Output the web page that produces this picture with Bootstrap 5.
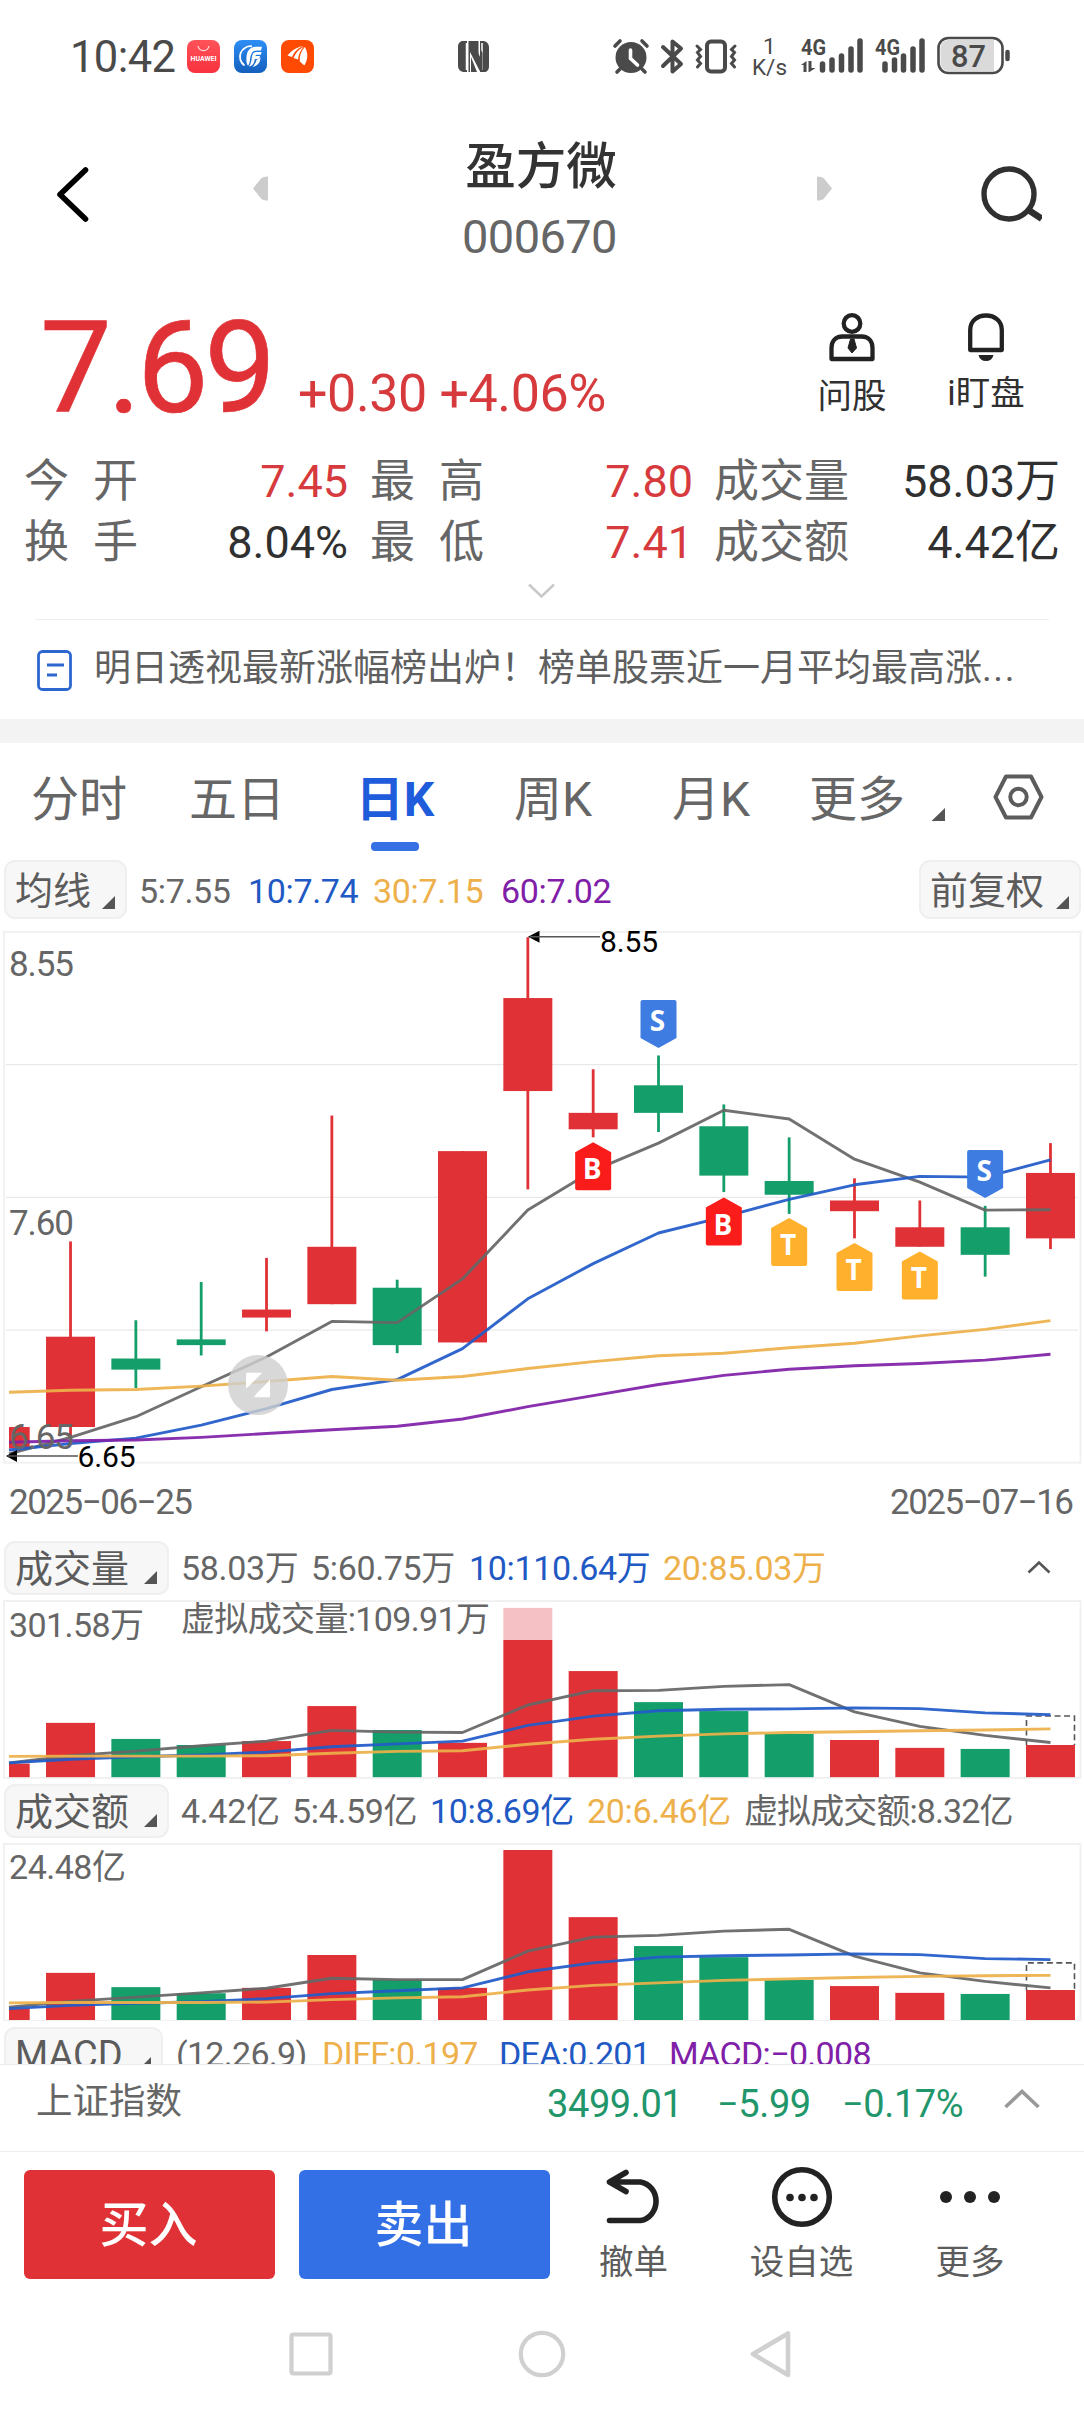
<!DOCTYPE html>
<html lang="zh-CN">
<head>
<meta charset="utf-8">
<meta name="viewport" content="width=device-width, initial-scale=1">
<title>盈方微 000670</title>
<link rel="stylesheet" href="https://cdn.jsdelivr.net/npm/bootstrap@5.3.0/dist/css/bootstrap.min.css">
<style>
:root{--up:#e03236;--down:#149e6a;--blue:#2159c4;--gold:#edb04a;--violet:#8020a8;--ink:#333;--soft:#666}
html,body{overflow:hidden}
body{width:1084px;height:2412px;background:#fff;color:var(--soft);font-family:Roboto,"Noto Sans CJK SC",sans-serif;line-height:1;white-space:nowrap}
svg{display:block;flex:none}
svg text{font-family:Roboto,"Noto Sans CJK SC",sans-serif}
.up{color:var(--up)}.down{color:#21966a}.ink{color:var(--ink)}.blu{color:var(--blue)}.gld{color:var(--gold)}.vio{color:var(--violet)}
.statusbar{height:112px;padding-left:70px;color:#4a4a4a}
.clock{width:117px;font-size:43.5px;letter-spacing:-.6px;font-weight:400;padding-top:4px}
.head{height:188px;padding:0 42px 0 56px}
.head-title{font-size:50.5px;font-weight:500;color:#333;padding:30px 3px 0 0}
.head-code{font-size:47px;letter-spacing:-.6px;padding:20px 6px 0 0}
.quote{height:152px;padding-left:40px}
.price{font-size:128px;letter-spacing:-4.5px;width:258px;font-weight:400;padding-top:4px;-webkit-text-stroke:.6px var(--up)}
.chg{font-size:52px;letter-spacing:-.4px;color:#d63a3d;padding-top:68px}
.tool{width:134px;font-size:34.5px;font-weight:400;color:#303030;padding-top:12px}
.stats{height:122px;font-size:45px;padding:0 24px 0 24px}
.stats .line{height:61px;padding-bottom:2px}
.stats b{font-weight:400;color:#303030}
.stats b.up{color:#d63a3d}
.pair{letter-spacing:24px}
.k1{width:171px}.v1{width:153px}.k2{width:143px;margin-left:22px}.v2{width:180px}.k3{margin-left:21px;width:136px}
.rule{height:1px;background:#eee;margin:0 35px}
.news{height:99px;padding-left:37px;font-size:37px;color:#5f5f5f}
.news span{padding-bottom:3px}
.news i{font-style:normal;letter-spacing:1.6px}
.band{height:24px;background:#f3f3f3}
.ktabs{height:117px;font-size:48px}
.ktabs .nav-link{padding:25px 0 0;color:var(--soft);line-height:64px;height:108px;width:158px;text-align:center;position:relative}
.ktabs .nav-link.active{color:#1e5cdb;font-weight:700}
.ktabs .nav-link.active::after{content:"";position:absolute;left:55px;bottom:0;width:48px;height:9px;border-radius:4px;background:#3570e4}
.ktabs .more-link{width:134px}
.pick{height:59px;border:2px solid #efefef;border-radius:11px;background:#f7f7f7;color:#5c5c5c;font-size:38px;padding:2px 10px 0 9px}
.legend{font-size:34px;padding-top:3px;letter-spacing:-.35px}
.pane-legend{padding-top:0}
.macd{height:43px;overflow:hidden}
.index{height:87px;border-top:1px solid #ebebeb;font-size:36.5px;padding-left:36px}
.index span{padding-top:19px}
.index .num{font-size:38px;letter-spacing:-.4px;padding-top:20px}
.trade{height:141px;border-top:1px solid #ededed;padding-left:24px}
.trade .btn{width:251px;height:109px;margin-top:18px;border:0;border-radius:6px;font-size:49px;font-weight:500;color:#fff;margin-right:24px;padding:3px 2px 0 0}
.buy{background:#e03236!important}.sell{background:#3370e6!important}
.act{font-size:34.5px;font-weight:400;color:#5c5c5c}
.act span{padding-top:7px}
</style>
</head>
<body>

<header class="statusbar d-flex align-items-center">
  <div class="clock">10:42</div>
  <svg width="310" height="40" viewBox="187 36 310 40">
    <defs>
      <linearGradient id="gr" x1="0" y1="0" x2="0" y2="1"><stop offset="0" stop-color="#ff5359"/><stop offset="1" stop-color="#f8323f"/></linearGradient>
      <linearGradient id="gb" x1="0" y1="0" x2="0" y2="1"><stop offset="0" stop-color="#2d8ef5"/><stop offset="1" stop-color="#145fbd"/></linearGradient>
    </defs>
    <rect x="187" y="40" width="33" height="33" rx="8" fill="url(#gr)"/>
    <path d="M198 46a5.6 5.6 0 0 0 11 0" fill="none" stroke="#ffd9da" stroke-width="1.3"/>
    <text x="190.500" y="61.200" font-size="6.500" font-weight="700" fill="#fff" textLength="26" lengthAdjust="spacingAndGlyphs">HUAWEI</text>
    <rect x="234" y="40" width="33" height="33" rx="8" fill="url(#gb)"/>
    <path d="M252 46.300a10.600 10.600 0 0 0-7.500 19.200" fill="none" stroke="#fff" stroke-width="1.800"/>
    <path d="M262 46.800h-5.500c-6.500 0-9.500 4-10 10-.3 4-.2 6.500 1.500 9 1-1 1.700-3 2-6 .7-6.500 2.500-9.300 7.500-9.300h3.500zM261.500 52h-5c-3 0-4 1.600-4.500 4.500-.5 4-1 7.500-3 10 3.500-.5 5.300-3 5.800-7.500h4.500l.8-3h-4.700c.2-1 .8-1.300 1.600-1.300h4zM260.500 57.500c0 5-3 8.500-8 9.500 2.200-2 3.300-4.500 4-7z" fill="#fff"/>
    <rect x="281" y="40" width="33" height="33" rx="8" fill="#ff4a03"/>
    <path d="M303 46c-6 1-11.500 4.500-15.500 9.500l4.500 1.500c2-5 5.500-8.500 11-11zM304 46.500c-5 2.500-8.500 6.500-10.500 11.500l4.500 1.500c.5-5 2.500-9.500 6-13zM304.800 47c-3.800 4-5.500 9-5 14.500l4.500 4c3.700-6 4.200-12.500.5-18.500z" fill="#fff"/>
    <path d="M463 41h4v31h-2.500c-4 0-6.500-2.500-6.500-6.500V47c0-3.500 2-6 5-6zM484.500 72h-4.500V41h2.500c4 0 6.500 2.500 6.500 6.500V66c0 3.500-1.500 6-4.500 6z" fill="#4a4a4a"/>
    <path d="M466.500 43v27M482 43v27" stroke="#fff" stroke-width="1.500"/>
    <path d="M468.500 41h4.500l7.500 17V49l2 4v17.500h-3L470 52v20h-1.500z" fill="#4a4a4a"/>
    <path d="M470.500 41h8v15zM477 72h-6V57z" fill="#4a4a4a"/>
  </svg>
  <svg class="ms-auto" width="404" height="52" viewBox="612 30 404 52" style="margin-right:68px">
    <g fill="#4a4a4a" stroke="#4a4a4a" stroke-linecap="round">
      <circle cx="631" cy="57.500" r="15.500" stroke="none"/>
      <path d="M615 46l5-5M642 41l5 5M620 69l-3 3M642 69l3 3" stroke-width="3.600"/>
      <path d="M630.500 50v8.500l7 6.500" fill="none" stroke="#fff" stroke-width="3.600"/>
      <path d="M663 47l18 17-8.500 7.500v-30l8.500 7L663 66" fill="none" stroke-width="4" stroke-linejoin="round"/>
      <rect x="707" y="41.500" width="18" height="30" rx="4" fill="none" stroke-width="4"/>
      <path d="M697 46l3.500 3.500-3 3 3 4-3 3.500 3 3.500-3 3.500M735 46l-3.500 3.500 3 3-3 4 3 3.500-3 3.500 3 3.500" fill="none" stroke-width="3"/>
    </g>
    <g fill="#4a4a4a">
      <text x="763" y="53.500" font-size="22.500">1</text>
      <text x="752" y="75" font-size="22.500" textLength="35" lengthAdjust="spacingAndGlyphs">K/s</text>
      <text x="801" y="54.500" font-size="22" font-weight="700" textLength="25" lengthAdjust="spacingAndGlyphs">4G</text>
      <text x="875" y="54.500" font-size="22" font-weight="700" textLength="25" lengthAdjust="spacingAndGlyphs">4G</text>
      <path d="M801 65l5.500-4v11h-3v-7zM808.500 61h3v7h4l-6 4h-1z"/>
    </g>
    <path d="M822.500 64v6M832 60v10M841.500 56v14M851 49v21M860 41v29M885 64v6M894.500 60v10M903.500 56v14M913 49v21M922 41v29" stroke="#4a4a4a" stroke-width="5.500" stroke-linecap="round"/>
    <rect x="938.500" y="38" width="64" height="35" rx="10" fill="#fff" stroke="#4a4a4a" stroke-width="2.600"/>
    <path d="M948 40h46v31h-46a8 8 0 0 1-7.500-8V48a8 8 0 0 1 7.500-8z" fill="#dadada"/>
    <path d="M1007.500 52v7" stroke="#4a4a4a" stroke-width="4.500" stroke-linecap="round"/>
    <text x="951" y="66.500" font-size="31" font-weight="500" fill="#4a4a4a" textLength="35" lengthAdjust="spacingAndGlyphs">87</text>
  </svg>
</header>

<nav class="head d-flex align-items-start">
  <svg class="mt-5" width="34" height="66" viewBox="56 160 34 66"><path d="M85.500 170L60 194.500 85.500 219" fill="none" stroke="#000" stroke-width="5.600" stroke-linecap="round" stroke-linejoin="round"/></svg>
  <div class="d-flex flex-fill justify-content-between" style="padding-left:162px;padding-right:147px">
    <svg width="16" height="150" viewBox="253 112 16 150"><path d="M254 188.500l8-10q2-2 7-2v24q-5 0-7-2z" fill="#ccc"/></svg>
    <div class="text-center">
      <div class="head-title">盈方微</div>
      <div class="head-code">000670</div>
    </div>
    <svg width="16" height="150" viewBox="817 112 16 150"><path d="M832 188.500l-8-10q-2-2-7-2v24q5 0 7-2z" fill="#ccc"/></svg>
  </div>
  <svg width="62" height="120" viewBox="980 112 62 120" fill="none" stroke="#303030" stroke-width="5.400"><circle cx="1009" cy="194" r="25"/><path d="M1030 211l9 6" stroke-width="6.500" stroke-linecap="square"/></svg>
</nav>

<section class="quote d-flex">
  <div class="price up">7.69</div>
  <div class="chg">+0.30 +4.06%</div>
  <div class="d-flex ms-auto" style="padding-right:31px">
    <div class="tool d-flex flex-column align-items-center">
      <svg width="48" height="50" viewBox="828 312 48 50" fill="none" stroke="#222" stroke-width="4.300"><circle cx="852" cy="323.500" r="8.300"/><path d="M831.500 359v-11c0-7 4-11.500 11-11.500h19c7 0 11 4.500 11 11.500v11z" stroke-linejoin="round"/><path d="M850.500 339h3.500l2.500 9-4.500 5-4-5z" fill="#222" stroke-width="1"/></svg>
      <div style="padding-top:17px">问股</div>
    </div>
    <div class="tool d-flex flex-column align-items-center">
      <svg width="40" height="50" viewBox="966 312 40 50"><path d="M970.200 350v-20c0-9 7-14.500 15.800-14.500s15.800 5.500 15.800 14.500v20z" fill="none" stroke="#222" stroke-width="4.300" stroke-linejoin="round"/><path d="M978.500 355h15q-1.500 6-7.500 6t-7.500-6z" fill="#222"/></svg>
      <div style="padding-top:14px">i盯盘</div>
    </div>
  </div>
</section>

<section class="stats">
  <div class="line d-flex align-items-center"><span class="k1 pair">今开</span><b class="v1 text-end up">7.45</b><span class="k2 pair">最高</span><b class="v2 text-end up">7.80</b><span class="k3">成交量</span><b class="ms-auto">58.03万</b></div>
  <div class="line d-flex align-items-center"><span class="k1 pair">换手</span><b class="v1 text-end">8.04%</b><span class="k2 pair">最低</span><b class="v2 text-end up">7.41</b><span class="k3">成交额</span><b class="ms-auto">4.42亿</b></div>
</section>
<div class="d-flex justify-content-center" style="height:45px"><svg width="34" height="30" viewBox="525 574 34 30"><path d="M529 584.500l12.500 12 12.500-12" fill="none" stroke="#c9c9c9" stroke-width="2.600"/></svg></div>
<div class="rule"></div>
<section class="news d-flex align-items-center">
  <svg width="57" height="44" viewBox="37 647 57 44" fill="none" stroke="#2c66cf"><rect x="38.500" y="650.500" width="32" height="38" rx="4" stroke-width="2.800"/><path d="M47 664h17M47 674h10" stroke-width="3.200"/></svg>
  <span>明日透视最新涨幅榜出炉！榜单股票近一月平均最高涨<i>...</i></span>
</section>
<div class="band"></div>

<nav class="ktabs nav d-flex flex-nowrap">
  <a class="nav-link">分时</a><a class="nav-link">五日</a><a class="nav-link active">日K</a><a class="nav-link">周K</a><a class="nav-link">月K</a>
  <a class="nav-link more-link">更多</a>
  <svg width="130" height="100" viewBox="924 743 130 100"><path d="M945 808v13h-13.500z" fill="#555"/><path d="M1006 776.500h25l10.500 20.500-10.500 20.500h-25L995.500 797z" fill="none" stroke="#5c5c5c" stroke-width="4" stroke-linejoin="round"/><circle cx="1018.500" cy="797" r="8.200" fill="none" stroke="#5c5c5c" stroke-width="4"/></svg>
</nav>

<div class="d-flex align-items-center" style="height:59px;padding:0 3px 0 4px">
  <div class="pick d-flex align-items-center" style="width:123px">均线<svg class="ms-auto" width="13" height="13" viewBox="0 0 13 13" style="margin-top:23px"><path d="M13 0v13H0z" fill="#555"/></svg></div>
  <div class="legend d-flex flex-fill" style="padding-left:12px"><span style="width:109px">5:7.55</span><span class="blu" style="width:125px">10:7.74</span><span class="gld" style="width:128px">30:7.15</span><span class="vio">60:7.02</span></div>
  <div class="pick d-flex align-items-center" style="width:162px">前复权<svg class="ms-auto" width="13" height="13" viewBox="0 0 13 13" style="margin-top:23px"><path d="M13 0v13H0z" fill="#555"/></svg></div>
</div>

<svg id="kline" width="1084" height="622" viewBox="0 919 1084 622"></svg>

<div class="d-flex align-items-center" style="height:54px;padding-left:4px">
  <div class="pick d-flex align-items-center" style="width:165px;height:54px">成交量<svg class="ms-auto" width="13" height="13" viewBox="0 0 13 13" style="margin-top:16px"><path d="M13 0v13H0z" fill="#555"/></svg></div>
  <div class="legend pane-legend d-flex" style="padding-left:12px"><span style="width:130px">58.03万</span><span style="width:158px">5:60.75万</span><span class="blu" style="width:194px">10:110.64万</span><span class="gld">20:85.03万</span></div>
  <svg class="ms-auto" width="26" height="16" viewBox="1026 1556 26 16" style="margin-right:32px"><path d="M1028.500 1568.500l10.500-10 10.500 10" fill="none" stroke="#555" stroke-width="2.600"/></svg>
</div>
<svg id="vol" width="1084" height="189" viewBox="0 1595 1084 189"></svg>

<div class="d-flex align-items-center" style="height:54px;padding-left:4px">
  <div class="pick d-flex align-items-center" style="width:165px;height:54px">成交额<svg class="ms-auto" width="13" height="13" viewBox="0 0 13 13" style="margin-top:16px"><path d="M13 0v13H0z" fill="#555"/></svg></div>
  <div class="legend pane-legend d-flex" style="padding-left:12px"><span style="width:111px">4.42亿</span><span style="width:138px">5:4.59亿</span><span class="blu" style="width:157px">10:8.69亿</span><span class="gld" style="width:157px">20:6.46亿</span><span style="letter-spacing:-.9px">虚拟成交额:8.32亿</span></div>
</div>
<svg id="amt" width="1084" height="183" viewBox="0 1838 1084 183"></svg>

<div class="macd"><div class="d-flex align-items-center" style="height:54px;padding-left:4px;margin-top:6px">
  <div class="pick d-flex align-items-center" style="width:159px;height:54px">MACD<svg class="ms-auto" width="13" height="13" viewBox="0 0 13 13" style="margin-top:16px"><path d="M13 0v13H0z" fill="#555"/></svg></div>
  <div class="legend pane-legend d-flex" style="padding-left:13px;letter-spacing:-.7px"><span style="width:146px">(12.26.9)</span><span class="gld" style="width:177px">DIFF:0.197</span><span class="blu" style="width:170px">DEA:0.201</span><span class="vio">MACD:−0.008</span></div>
</div></div>

<section class="index d-flex align-items-start">
  <span style="width:511px">上证指数</span>
  <span class="num down" style="width:170px">3499.01</span><span class="num down" style="width:125px">−5.99</span><span class="num down" style="width:161px">−0.17%</span>
  <svg width="38" height="50" viewBox="1004 2064 38 50"><path d="M1006.500 2106l16.500-15.500 16.500 15.500" fill="none" stroke="#999" stroke-width="3.600"/></svg>
</section>

<section class="trade d-flex">
  <button class="btn buy">买入</button><button class="btn sell">卖出</button>
  <div class="act d-flex flex-column align-items-center" style="width:119px"><svg width="64" height="86" viewBox="602 2152 64 86"><path d="M609.500 2182h31a18.500 19.500 0 0 1 0 38.500h-31M626 2172.500l-16.500 9.500 16.500 9.500" fill="none" stroke="#222" stroke-width="5.600" stroke-linecap="round" stroke-linejoin="round"/></svg><span>撤单</span></div>
  <div class="act d-flex flex-column align-items-center" style="width:217px"><svg width="64" height="86" viewBox="770 2152 64 86"><circle cx="802" cy="2197" r="27.300" fill="none" stroke="#222" stroke-width="5.600"/><circle cx="790" cy="2197.500" r="3.800" fill="#222"/><circle cx="802" cy="2197.500" r="3.800" fill="#222"/><circle cx="814" cy="2197.500" r="3.800" fill="#222"/></svg><span>设自选</span></div>
  <div class="act d-flex flex-column align-items-center" style="width:120px"><svg width="64" height="86" viewBox="938 2152 64 86" fill="#222"><circle cx="946" cy="2197" r="6"/><circle cx="970" cy="2197" r="6"/><circle cx="994" cy="2197" r="6"/></svg><span>更多</span></div>
</section>

<footer class="d-flex justify-content-center" style="height:120px">
  <svg width="520" height="120" viewBox="282 2292 520 120" fill="none" stroke="#d0d0d0" stroke-width="4.200" stroke-linejoin="round"><rect x="291.500" y="2334.500" width="39" height="39" rx="2"/><circle cx="542" cy="2354" r="21.200"/><path d="M788 2333.500v41.500L753 2354z" stroke-width="4.600"/></svg>
</footer>

<script src="https://cdn.jsdelivr.net/npm/bootstrap@5.3.0/dist/js/bootstrap.bundle.min.js"></script>
<script>
const UP='#e03236',DOWN='#149e6a',GRAY='#666',BLUE='#215bc8',GOLD='#edb04a',VIO='#8020a8';
const cx=i=>5.2+i*65.33;
// rectangles are clamped to the plot's left edge, so the oldest day is cut off
const box=(i,t,b,c,o=1)=>{const l=Math.max(9,cx(i)-24.5),r=cx(i)+24.5;return `<rect x="${l}" y="${t}" width="${r-l}" height="${b-t}" fill="${c}" opacity="${o}"/>`};
const line=(ys,f,c)=>`<polyline points="${ys.map((v,i)=>Math.max(9,cx(i)).toFixed(1)+','+f(v).toFixed(1)).join(' ')}" fill="none" stroke="${c}" stroke-width="2.9" stroke-linejoin="round" opacity=".93"/>`;
const txt=(x,y,s,size,w,c=GRAY)=>`<text x="${x}" y="${y}" font-size="${size}" fill="${c}" textLength="${w}">${s}</text>`;
const frame=(t,b)=>`<rect x="4" y="${t}" width="1076.5" height="${b-t}" fill="none" stroke="#f0f0f0" stroke-width="1.8"/>`;

// daily candles: high, body top, body bottom, low, colour
const P=v=>920+v/2.6133;
const K=[[1325,1325,1381,1381,1],[840,1089,1325,1352,1],[1046,1146,1175,1223,0],[946,1096,1111,1138,0],[883,1018,1039,1075,1],[511,854,1004,1004,1],[940,961,1111,1132,0],[604,604,1104,1104,1],[45,204,447,704,1],[390,504,547,568,1],[354,432,504,554,0],[482,539,668,711,0],[568,682,718,768,0],[675,733,761,832,1],[733,803,854,854,1],[747,803,875,932,0],[583,661,832,860,1]];
let h=frame(931.8,1462.7)+[378,725,1072].map(v=>`<path d="M6 ${P(v)}H1078" stroke="#e9e9e9" stroke-width="1.3"/>`).join('');
K.forEach(([a,t,b,z,u],i)=>{const c=u?UP:DOWN;if(i)h+=`<path d="M${cx(i)} ${P(a)}V${P(z)}" stroke="${c}" stroke-width="2.8"/>`;h+=box(i,P(t),P(b),c)});
h+=line([1395,1352,1298,1220,1142,1049,1052,938,758,655,583,497,520,625,685,758,757],P,GRAY)
 +line([1385,1368,1354,1320,1277,1227,1201,1120,990,898,818,776,730,692,670,672,627],P,BLUE)
 +line([1234,1229,1227,1218,1206,1193,1203,1193,1172,1154,1139,1132,1118,1106,1087,1070,1047],P,GOLD)
 +line([1365,1361,1359,1352,1342,1332,1323,1304,1272,1243,1214,1190,1174,1165,1159,1150,1135],P,VIO);
[[10,1000,'S'],[9,1142.3,'B'],[11,1197.5,'B'],[12,1218,'T'],[13,1243,'T'],[14,1251.4,'T'],[15,1150,'S']].forEach(([i,y,s])=>{
 const x=cx(i),c={S:'#3f7ce2',B:'#f91c1b',T:'#ffb02c'}[s];
 const d=s=='S'?`M${x-18} ${y+2}q0-2 2-2h32q2 0 2 2v36l-18 10-18-10z`:`M${x} ${y}l18 10v36q0 2-2 2h-32q-2 0-2-2v-36z`;
 h+=`<path d="${d}" fill="${c}"/><text x="${x-1}" y="${y+(s=='S'?30.5:37)}" font-size="28" font-weight="700" fill="#fff" text-anchor="middle" style="font-family:'Open Sans'">${s}</text>`});
h+=txt(9,975.5,'8.55',35,65)+txt(9,1234.6,'7.60',35,65)+txt(9,1449,'6.65',35,65)
 +`<path d="M528 936.8l11.500-6v12zM6 1456l11-6v12z" fill="#000"/><path d="M530 936.8h70M8 1456h70" stroke="#555" stroke-width="1.6"/>`
 +txt(600,951.5,'8.55',30,58,'#000')+txt(77.5,1466.5,'6.65',30,58,'#000')
 +`<circle cx="258" cy="1385" r="30" fill="#cfcfcf" opacity=".82"/><path d="M246 1388.500V1374q0-1.200 1.200-1.200h15L260 1375l-10.500 10.500zM270 1379.500V1396q0 1.200-1.200 1.200H254l2.500-3.700 10-10z" fill="#fff"/>`
 +txt(9,1513.5,'2025−06−25',35,184)+txt(890,1513.5,'2025−07−16',35,184);
kline.innerHTML=h;

// volume and turnover panes
const V=v=>1520+v/2.8;
const G=[1,1,0,0,1,1,0,1,1,1,0,0,0,1,1,0,1];
function pane(el,tops,base,top,bot,dash,g,b,o,extra){
 let s=frame(V(top),V(bot));
 tops.forEach((t,i)=>s+=box(i,V(t),V(base),G[i]?UP:DOWN));
 s+=`<path d="M${cx(16)-24} ${V(tops[16])}V${V(dash)}h48V${V(tops[16])}" fill="none" stroke="#555" stroke-width="1.6" stroke-dasharray="6 3.5"/>`;
 el.innerHTML=s+extra+line(g,V,GRAY)+line(b,V,BLUE)+line(o,V,GOLD);
}
pane(vol,[682,568,613,630,619,521,588,624,336,423,510,535,599,616,638,641,630],720,227,722,549,
 [680,660,647,632,619,589,594,595,518,478,477,466,461,537,578,603,623],
 [680,670,663,658,650,635,627,619,575,549,534,530,529,526,528,540,545],
 [662,661,661,661,660,653,648,646,628,614,605,599,595,593,590,588,585],
 box(8,V(246),V(336),'#f6c1c4')+txt(9,1636.5,'301.58万',34,135)+txt(181,1630.5,'虚拟成交量:109.91万',34,309));
pane(amt,[1368,1268,1308,1325,1310,1218,1288,1310,924,1112,1193,1224,1288,1305,1324,1327,1316],1400,907,1402,1240,
 [1364,1348,1336,1324,1311,1283,1287,1287,1207,1168,1163,1151,1146,1221,1268,1292,1310],
 [1368,1359,1353,1349,1340,1326,1318,1310,1265,1240,1224,1220,1218,1215,1217,1228,1231],
 [1352,1351,1351,1351,1350,1343,1338,1335,1316,1303,1296,1289,1285,1281,1278,1276,1275],
 txt(9,1879,'24.48亿',34,117));
</script>
</body>
</html>
